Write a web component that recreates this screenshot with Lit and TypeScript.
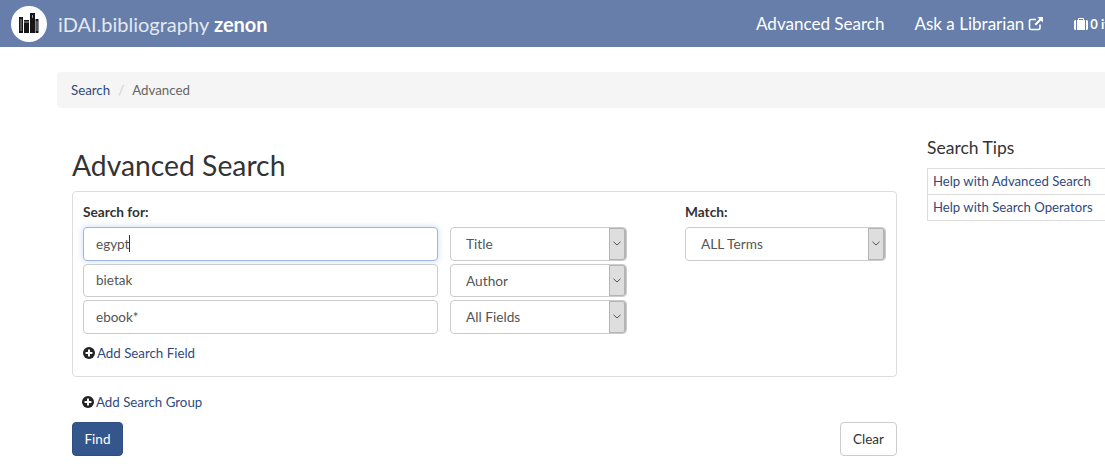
import { LitElement, css, html } from "lit";
import { customElement } from "lit/decorators.js";

const plusIcon = html`<svg class="plus" viewBox="0 0 14 14">
  <circle cx="7" cy="7" r="7" fill="#222"></circle>
  <path d="M3 7h8M7 3v8" stroke="#fff" stroke-width="2.4"></path>
</svg>`;

@customElement("app-root")
export class AppRoot extends LitElement {
  static styles = css`
    :host {
      display: block;
      width: 1105px;
      height: 474px;
      overflow: hidden;
      background: #fff;
      font-family: "Lato", "Open Sans", sans-serif;
      font-size: 14px;
      color: #333;
    }
    a {
      color: #2f4a80;
      text-decoration: none;
    }

    /* top bar */
    .top {
      display: flex;
      align-items: center;
      height: 47px;
      background: #667ea9;
      color: #fff;
      white-space: nowrap;
    }
    .logo {
      flex: none;
      width: 36px;
      height: 36px;
      margin-left: 11px;
    }
    .brand {
      margin-left: 11px;
      font-size: 20px;
      color: #e4e8f0;
      flex: 1;
    }
    .brand b {
      color: #fff;
    }
    .nav {
      display: flex;
      align-items: center;
      flex: none;
      width: 349px;
      overflow: hidden;
      font-size: 17.05px;
      gap: 30px;
    }
    .nav span {
      display: inline-flex;
      align-items: center;
      gap: 4px;
      flex: none;
    }
    .nav .cart {
      gap: 2px;
      font-size: 13px;
      font-weight: 700;
    }
    .nav svg {
      display: block;
    }

    /* breadcrumb */
    .crumbs {
      display: flex;
      align-items: center;
      gap: 8px;
      height: 36px;
      margin: 25px 0 0 57px;
      padding-left: 14px;
      background: #f5f5f5;
      border-radius: 4px 0 0 4px;
      font-size: 13.3px;
      color: #666;
    }
    .crumbs i {
      font-style: normal;
      color: #ccc;
    }

    /* page columns */
    .page {
      display: flex;
      margin-left: 72px;
    }
    .main {
      flex: none;
      width: 825px;
    }
    h1 {
      margin: 0;
      padding-top: 39px;
      font-size: 28.3px;
      font-weight: 400;
      line-height: 36px;
      color: #333;
    }
    .panel {
      display: grid;
      grid-template-columns: 355px 177px 1fr;
      column-gap: 12px;
      height: 186px;
      margin-top: 8px;
      padding: 11px 10px 0;
      box-sizing: border-box;
      border: 1px solid #ddd;
      border-radius: 4px;
    }
    .label {
      display: block;
      height: 24px;
      font-size: 13.7px;
      font-weight: 700;
      line-height: 18px;
      color: #333;
    }
    .stack {
      display: flex;
      flex-direction: column;
      gap: 3px;
    }
    .input,
    .select {
      display: flex;
      align-items: center;
      height: 33.5px;
      box-sizing: border-box;
      border: 1px solid #ccc;
      border-radius: 4px;
      background: #fff;
      color: #555;
    }
    .input {
      padding-left: 12px;
      font-size: 13.5px;
    }
    .input.focus {
      border-color: #9db7e4;
      box-shadow: 0 0 6px rgba(102, 140, 220, 0.35);
    }
    .caret {
      width: 1px;
      height: 17px;
      background: #333;
    }
    .select {
      justify-content: space-between;
      padding-left: 15px;
      overflow: hidden;
      font-size: 13.7px;
    }
    .arrow {
      display: flex;
      align-items: center;
      justify-content: center;
      width: 17px;
      height: 100%;
      box-sizing: border-box;
      border: 1px solid #b4b4b4;
      border-right-width: 2px;
      border-radius: 0 3px 3px 0;
      background: #dedede;
    }
    .add {
      display: flex;
      align-items: center;
      gap: 2px;
      font-size: 13.3px;
    }
    .add .plus {
      width: 12px;
      height: 12px;
    }
    .panel .add {
      margin-top: 11px;
    }
    .match {
      margin-left: 46px;
    }
    .group {
      margin: 17px 0 0 10px;
    }
    .actions {
      display: flex;
      justify-content: space-between;
      margin-top: 12px;
    }
    button {
      height: 34px;
      padding: 0 12px;
      border: 1px solid #ccc;
      border-radius: 4px;
      background: #fff;
      color: #333;
      font: inherit;
      font-size: 13.5px;
    }
    button.primary {
      width: 51px;
      padding: 0;
      border-color: #2e4d80;
      background: #34568c;
      color: #fff;
    }

    /* side column */
    .side {
      margin: 29px 0 0 30px;
      flex: 1;
    }
    .side h4 {
      margin: 0 0 9px;
      font-size: 17.5px;
      font-weight: 400;
      line-height: 22px;
      color: #333;
    }
    .tips a {
      display: block;
      height: 25px;
      padding-left: 5px;
      border: 1px solid #ddd;
      border-right: 0;
      font-size: 13.15px;
      line-height: 25px;
      white-space: nowrap;
    }
    .tips a + a {
      border-top: 0;
    }
  `;

  private selectBox(label: string) {
    return html`<div class="select">
      ${label}
      <div class="arrow">
        <svg width="8" height="5" viewBox="0 0 8 5">
          <path d="M.5.8 4 4 7.500.8" fill="none" stroke="#555" stroke-width="1"></path>
        </svg>
      </div>
    </div>`;
  }

  render() {
    return html`
      <div class="top">
        <svg class="logo" viewBox="0 0 36 36">
          <circle cx="18" cy="18" r="18" fill="#fff"></circle>
          <path d="M8 11h4v16H8zM13 14h5v13h-5zM19 7h5v20h-5zM24.500 13h3v14h-3z" fill="#161616"></path>
          <path d="M10 13v12M13 16h5M21.500 9v3M26 15v10" stroke="#999" stroke-width="1"></path>
        </svg>
        <div class="brand">iDAI.bibliography <b>zenon</b></div>
        <div class="nav">
          <span>Advanced Search</span>
          <span>
            Ask a Librarian
            <svg width="16" height="15" viewBox="0 0 16 15">
              <path d="M12 8.500V12a1.500 1.500 0 0 1-1.500 1.500H3A1.500 1.500 0 0 1 1.500 12V5A1.500 1.500 0 0 1 3 3.500h5" fill="none" stroke="#fff" stroke-width="1.600"></path>
              <path d="M9.500 1h5.500v5.500l-2-2-5 5-1.500-1.500 5-5z" fill="#fff"></path>
            </svg>
          </span>
          <span class="cart">
            <svg width="14" height="12" viewBox="0 0 14 12">
              <path d="M0 3.500A1.500 1.500 0 0 1 1.500 2H2v10h-.5A1.500 1.500 0 0 1 0 10.500zM3 2h1V1a1 1 0 0 1 1-1h4a1 1 0 0 1 1 1v1h1v10H3zm2 0h4V1H5zM12 2h.5A1.500 1.500 0 0 1 14 3.500v7a1.500 1.500 0 0 1-1.500 1.500H12z" fill="#fff"></path>
            </svg>
            0 items
          </span>
        </div>
      </div>

      <div class="crumbs">
        <a href="#">Search</a>
        <i>/</i>
        <span>Advanced</span>
      </div>

      <div class="page">
        <div class="main">
          <h1>Advanced Search</h1>
          <div class="panel">
            <div>
              <span class="label">Search for:</span>
              <div class="stack">
                <div class="input focus">egypt<span class="caret"></span></div>
                <div class="input">bietak</div>
                <div class="input">ebook*</div>
              </div>
              <a class="add" href="#">${plusIcon}Add Search Field</a>
            </div>
            <div>
              <span class="label"></span>
              <div class="stack">
                ${this.selectBox("Title")}
                ${this.selectBox("Author")}
                ${this.selectBox("All Fields")}
              </div>
            </div>
            <div class="match">
              <span class="label">Match:</span>
              ${this.selectBox("ALL Terms")}
            </div>
          </div>
          <a class="add group" href="#">${plusIcon}Add Search Group</a>
          <div class="actions">
            <button class="primary">Find</button>
            <button>Clear</button>
          </div>
        </div>
        <div class="side">
          <h4>Search Tips</h4>
          <div class="tips">
            <a href="#">Help with Advanced Search</a>
            <a href="#">Help with Search Operators</a>
          </div>
        </div>
      </div>
    `;
  }
}
